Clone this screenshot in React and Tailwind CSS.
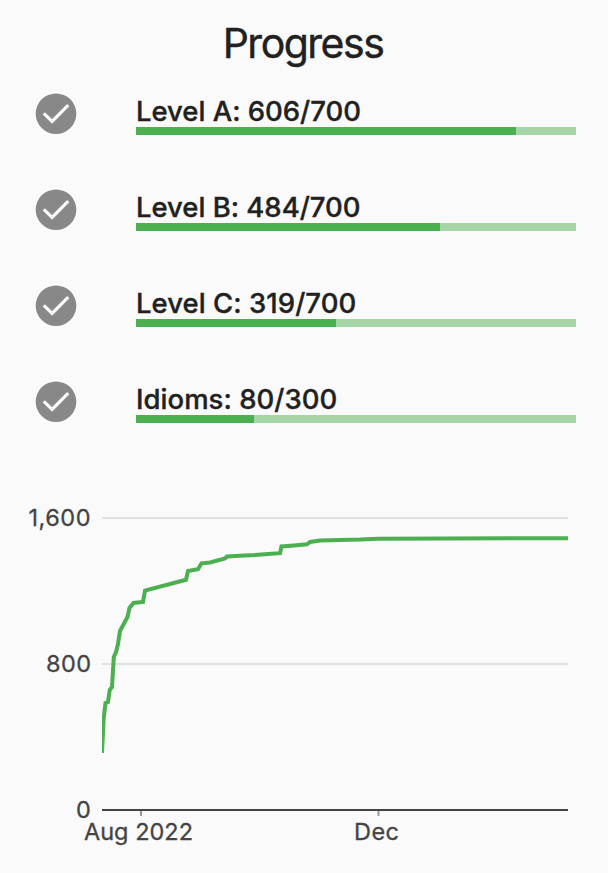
const levels = [
  { label: 'Level A: 606/700', fill: 'w-[380px]', spacing: 'tracking-[-0.03px]' },
  { label: 'Level B: 484/700', fill: 'w-[304px]', spacing: 'tracking-[-0.03px]' },
  { label: 'Level C: 319/700', fill: 'w-[200px]', spacing: 'tracking-[0.04px]' },
  { label: 'Idioms: 80/300', fill: 'w-[118px]', spacing: 'tracking-[0.03px]' },
];

function CheckIcon() {
  return (
    <svg className="mt-[5px] h-[42px] w-[42px] shrink-0" viewBox="0 0 42 42">
      <circle cx="21" cy="20.7" r="20.3" fill="#888888" />
      <path d="M8.8 20.3 17.1 28.4 33.2 12.2" fill="none" stroke="#fafafa" strokeWidth="3.2" />
    </svg>
  );
}

function Level({ label, fill, spacing }) {
  return (
    <div className="flex h-24 items-start pl-[35px]">
      <CheckIcon />
      <div className="ml-[59px] w-[440px]">
        <div className={`h-[39px] pt-[7px] text-[27.5px] leading-[33px] font-medium whitespace-nowrap [-webkit-text-stroke:0.35px_#212121] ${spacing}`}>{label}</div>
        <div className="h-2 bg-[#a5d6a7]">
          <div className={`h-2 bg-[#4caf50] ${fill}`} />
        </div>
      </div>
    </div>
  );
}

function Chart() {
  return (
    <svg className="block h-[401px] w-[608px]" viewBox="0 472 608 401">
      <defs>
        <clipPath id="plot">
          <rect x="102" y="516" width="466" height="294" />
        </clipPath>
      </defs>
      <path d="M102 518H568M102 664H568" stroke="#e0e0e0" strokeWidth="2" />
      <path d="M141 811V816M378.5 811V816" stroke="#999999" strokeWidth="2" />
      <path d="M102 810H568" stroke="#444444" strokeWidth="2" />
      <path
        clipPath="url(#plot)"
        d="M102 753 103.7 718 105.5 703 108 702 109.7 690 112 687 113.8 657 116 652 118 644 120 631 127.5 617 129.5 608 133.5 603 143 602 145 590.5 186 579.8 188 571 198 569.2 201.5 563.3 210 562.5 225 558.5 227 556.5 240 555.7 255 555.1 268 554 280 553.2 281.5 546.5 294 545.5 307 544.3 310 541.9 320 540.5 360 539.6 378 538.7 568 538.2"
        fill="none"
        stroke="#4caf50"
        strokeWidth="4"
        strokeLinejoin="miter"
      />
      <g fill="#444444" stroke="#444444" strokeWidth="0.3" fontSize="23.5" fontFamily="Inter, sans-serif">
        <text x="28.5" y="526" textLength="62">1,600</text>
        <text x="46" y="672" textLength="45">800</text>
        <text x="76" y="818">0</text>
        <text x="84" y="840" textLength="109">Aug 2022</text>
        <text x="354" y="840" textLength="45">Dec</text>
      </g>
    </svg>
  );
}

export default function App() {
  return (
    <main className="h-[873px] w-[608px] overflow-hidden bg-[#fafafa] font-[Inter,sans-serif] text-[#212121]">
      <h1 className="h-[88px] pt-[18px] pr-[2px] text-center text-[41px] leading-[50px] font-normal tracking-[-1.5px] [-webkit-text-stroke:0.4px_#212121]">Progress</h1>
      <section className="h-96">
        {levels.map((level) => (
          <Level key={level.label} {...level} />
        ))}
      </section>
      <Chart />
    </main>
  );
}
